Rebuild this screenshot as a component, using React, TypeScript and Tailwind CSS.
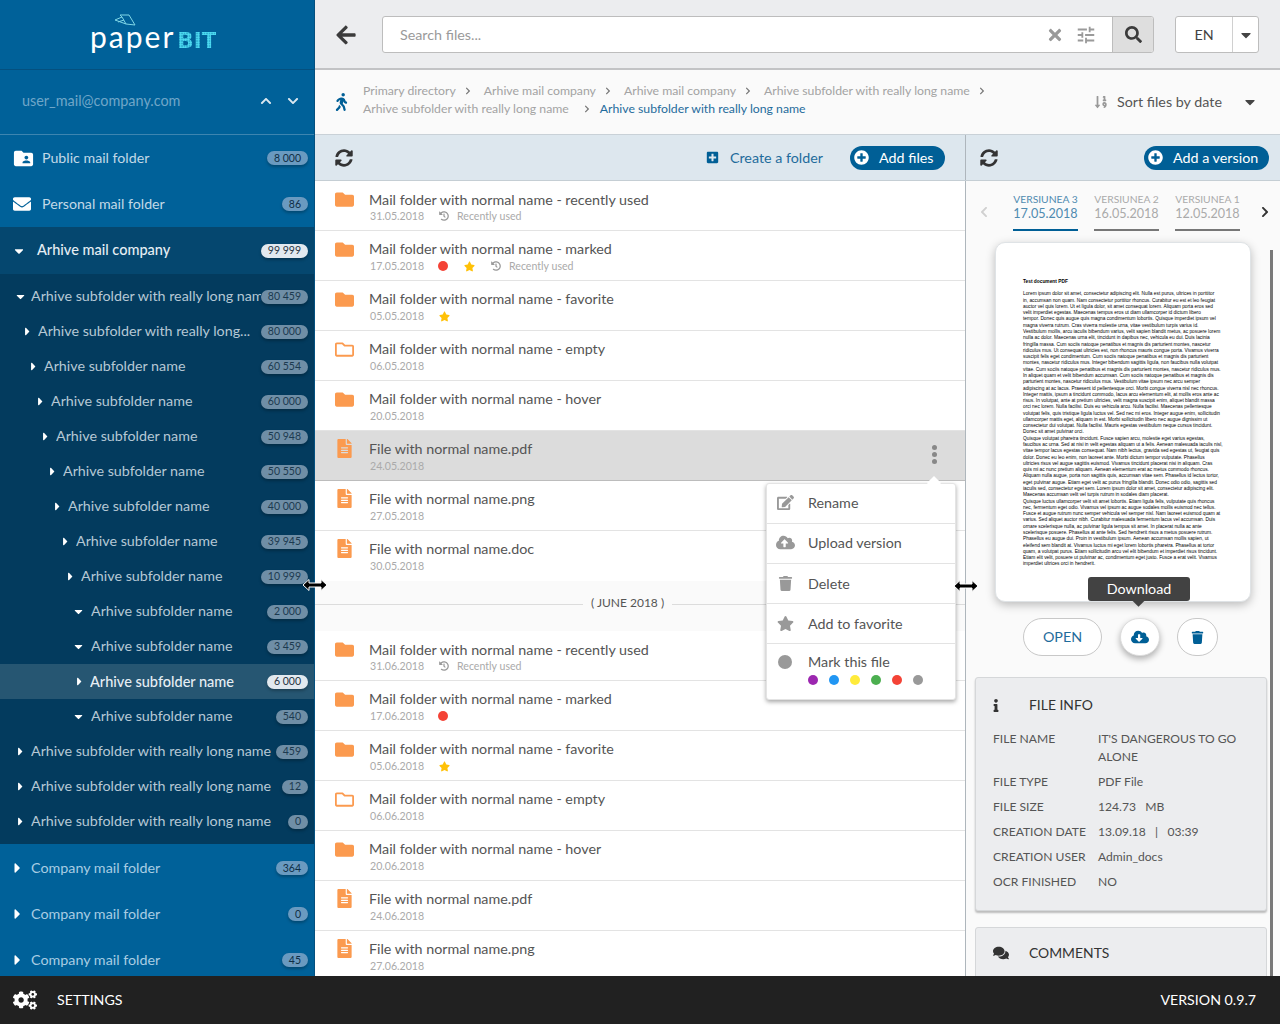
import React from "react";
import { FaArrowLeft, FaCaretDown, FaCaretRight, FaChevronDown, FaChevronLeft, FaChevronRight, FaChevronUp, FaCloudDownloadAlt, FaCloudUploadAlt, FaCogs, FaComments, FaEdit, FaEnvelope, FaFileAlt, FaFolder, FaHistory, FaInfo, FaPlusCircle, FaPlusSquare, FaRegFolder, FaSearch, FaSortNumericDown, FaStar, FaSyncAlt, FaTimes, FaTrash, FaWalking } from "react-icons/fa";
import { MdFolderShared, MdTune } from "react-icons/md";

const subRows = [
  { name: "Arhive subfolder with really long name", count: "80 459", pad: "pl-[18px]", open: true, wide: false },
  { name: "Arhive subfolder with really long...", count: "80 000", pad: "pl-[25px]", open: false, wide: false },
  { name: "Arhive subfolder name", count: "60 554", pad: "pl-[31px]", open: false, wide: false },
  { name: "Arhive subfolder name", count: "60 000", pad: "pl-[38px]", open: false, wide: false },
  { name: "Arhive subfolder name", count: "50 948", pad: "pl-[43px]", open: false, wide: false },
  { name: "Arhive subfolder name", count: "50 550", pad: "pl-[50px]", open: false, wide: false },
  { name: "Arhive subfolder name", count: "40 000", pad: "pl-[55px]", open: false, wide: false },
  { name: "Arhive subfolder name", count: "39 945", pad: "pl-[63px]", open: false, wide: false },
  { name: "Arhive subfolder name", count: "10 999", pad: "pl-[68px]", open: false, wide: false },
  { name: "Arhive subfolder name", count: "2 000", pad: "pl-[74px]", open: true, wide: true },
  { name: "Arhive subfolder name", count: "3 459", pad: "pl-[74px]", open: true, wide: true },
  { name: "Arhive subfolder name", count: "6 000", pad: "pl-[77px]", open: false, wide: false, active: true },
  { name: "Arhive subfolder name", count: "540", pad: "pl-[74px]", open: true, wide: true },
  { name: "Arhive subfolder with really long name", count: "459", pad: "pl-[18px]", open: false, wide: false },
  { name: "Arhive subfolder with really long name", count: "12", pad: "pl-[18px]", open: false, wide: false },
  { name: "Arhive subfolder with really long name", count: "0", pad: "pl-[18px]", open: false, wide: false },
];

const mayRows = [
  { kind: "folder", name: "Mail folder with normal name - recently used", date: "31.05.2018", recent: true, first: true },
  { kind: "folder", name: "Mail folder with normal name - marked", date: "17.05.2018", red: true, star: true, recent: true },
  { kind: "folder", name: "Mail folder with normal name - favorite", date: "05.05.2018", star: true },
  { kind: "empty", name: "Mail folder with normal name - empty", date: "06.05.2018" },
  { kind: "folder", name: "Mail folder with normal name - hover", date: "20.05.2018" },
  { kind: "file", name: "File with normal name.pdf", date: "24.05.2018", selected: true },
  { kind: "file", name: "File with normal name.png", date: "27.05.2018" },
  { kind: "file", name: "File with normal name.doc", date: "30.05.2018", last: true },
];

const juneRows = [
  { kind: "folder", name: "Mail folder with normal name - recently used", date: "31.06.2018", recent: true, first: true },
  { kind: "folder", name: "Mail folder with normal name - marked", date: "17.06.2018", red: true },
  { kind: "folder", name: "Mail folder with normal name - favorite", date: "05.06.2018", star: true },
  { kind: "empty", name: "Mail folder with normal name - empty", date: "06.06.2018" },
  { kind: "folder", name: "Mail folder with normal name - hover", date: "20.06.2018" },
  { kind: "file", name: "File with normal name.pdf", date: "24.06.2018" },
  { kind: "file", name: "File with normal name.png", date: "27.06.2018" },
];

const docLines = [
  "Lorem ipsum dolor sit amet, consectetur adipiscing elit. Nulla est purus, ultrices in porttitor",
  "in, accumsan non quam. Nam consectetur porttitor rhoncus. Curabitur eu est et leo feugiat",
  "auctor vel quis lorem. Ut et ligula dolor, sit amet consequat lorem. Aliquam porta eros sed",
  "velit imperdiet egestas. Maecenas tempus eros ut diam ullamcorper id dictum libero",
  "tempor. Donec quis augue quis magna condimentum lobortis. Quisque imperdiet ipsum vel",
  "magna viverra rutrum. Cras viverra molestie urna, vitae vestibulum turpis varius id.",
  "Vestibulum mollis, arcu iaculis bibendum varius, velit sapien blandit metus, ac posuere lorem",
  "nulla ac dolor. Maecenas urna elit, tincidunt in dapibus nec, vehicula eu dui. Duis lacinia",
  "fringilla massa. Cum sociis natoque penatibus et magnis dis parturient montes, nascetur",
  "ridiculus mus. Ut consequat ultricies est, non rhoncus mauris congue porta. Vivamus viverra",
  "suscipit felis eget condimentum. Cum sociis natoque penatibus et magnis dis parturient",
  "montes, nascetur ridiculus mus. Integer bibendum sagittis ligula, non faucibus nulla volutpat",
  "vitae. Cum sociis natoque penatibus et magnis dis parturient montes, nascetur ridiculus mus.",
  "In aliquet quam et velit bibendum accumsan. Cum sociis natoque penatibus et magnis dis",
  "parturient montes, nascetur ridiculus mus. Vestibulum vitae ipsum nec arcu semper",
  "adipiscing at ac lacus. Praesent id pellentesque orci. Morbi congue viverra nisl nec rhoncus.",
  "Integer mattis, ipsum a tincidunt commodo, lacus arcu elementum elit, at mollis eros ante ac",
  "risus. In volutpat, ante at pretium ultricies, velit magna suscipit enim, aliquet blandit massa",
  "orci nec lorem. Nulla facilisi. Duis eu vehicula arcu. Nulla facilisi. Maecenas pellentesque",
  "volutpat felis, quis tristique ligula luctus vel. Sed nec mi eros. Integer augue enim, sollicitudin",
  "ullamcorper mattis eget, aliquam in est. Morbi sollicitudin libero nec augue dignissim ut",
  "consectetur dui volutpat. Nulla facilisi. Mauris egestas vestibulum neque cursus tincidunt.",
  "Donec sit amet pulvinar orci.",
  "Quisque volutpat pharetra tincidunt. Fusce sapien arcu, molestie eget varius egestas,",
  "faucibus ac urna. Sed at nisi in velit egestas aliquam ut a felis. Aenean malesuada iaculis nisl,",
  "vitae tempor lacus egestas consequat. Nam nibh lectus, gravida sed egestas ut, feugiat quis",
  "dolor. Donec eu leo enim, non laoreet ante. Morbi dictum tempor vulputate. Phasellus",
  "ultricies risus vel augue sagittis euismod. Vivamus tincidunt placerat nisi in aliquam. Cras",
  "quis mi ac nunc pretium aliquam. Aenean elementum erat ac metus commodo rhoncus.",
  "Aliquam nulla augue, porta non sagittis quis, accumsan vitae sem. Phasellus id lectus tortor,",
  "eget pulvinar augue. Etiam eget velit ac purus fringilla blandit. Donec odio odio, sagittis sed",
  "iaculis sed, consectetur eget sem. Lorem ipsum dolor sit amet, consectetur adipiscing elit.",
  "Maecenas accumsan velit vel turpis rutrum in sodales diam placerat.",
  "Quisque luctus ullamcorper velit sit amet lobortis. Etiam ligula felis, vulputate quis rhoncus",
  "nec, fermentum eget odio. Vivamus vel ipsum ac augue sodales mollis euismod nec tellus.",
  "Fusce et augue rutrum nunc semper vehicula vel semper nisl. Nam laoreet euismod quam at",
  "varius. Sed aliquet auctor nibh. Curabitur malesuada fermentum lacus vel accumsan. Duis",
  "ornare scelerisque nulla, ac pulvinar ligula tempus sit amet. In placerat nulla ac ante",
  "scelerisque posuere. Phasellus at ante felis. Sed hendrerit risus a metus posuere rutrum.",
  "Phasellus eu augue dui. Proin in vestibulum ipsum. Aenean accumsan mollis sapien, ut",
  "eleifend sem blandit at. Vivamus luctus mi eget lorem lobortis pharetra. Phasellus at tortor",
  "quam, a volutpat purus. Etiam sollicitudin arcu vel elit bibendum et imperdiet risus tincidunt.",
  "Etiam elit velit, posuere ut pulvinar ac, condimentum eget justo. Fusce a erat velit. Vivamus",
  "imperdiet ultrices orci in hendrerit.",
];

const infoRows = [
  { label: "FILE TYPE", value: "PDF File" },
  { label: "FILE SIZE", value: "124.73 \u00a0 MB" },
  { label: "CREATION DATE", value: "13.09.18 \u00a0 | \u00a0 03:39" },
  { label: "CREATION USER", value: "Admin_docs" },
  { label: "OCR FINISHED", value: "NO" },
];

const Badge = ({ count, tone }: { count: string; tone: string }) => (
  <span className={`shrink-0 h-[14px] min-w-[19px] px-[7px] rounded-full flex items-center justify-center text-[10.5px] leading-none shadow-[0_2px_3px_rgba(0,0,0,0.25)] ${tone}`}>
    {count}
  </span>
);

const ResizeCursor = ({ className }: { className: string }) => (
  <svg className={`absolute ${className}`} width="26" height="14" viewBox="0 0 26 14">
    <path d="M1 7 L7 1.5 V5 H19 V1.5 L25 7 L19 12.5 V9 H7 V12.5 Z" fill="#000" stroke="#fff" strokeWidth="1" />
  </svg>
);

const Sidebar = () => (
  <aside className="w-[315px] shrink-0 bg-[#006199] border-r border-[#04507f] overflow-hidden relative">
    <div className="h-[70px] border-b border-[#04507f] flex flex-col">
      <svg className="mt-[14px] ml-[114px]" width="22" height="12" viewBox="0 0 22 12" fill="none" stroke="#7fd6e6" strokeWidth="1">
        <path d="M1 6 L8 3 L6 1 L15 1 L21 11 L12 10 Z M8 3 L12 10 M4 8 L10 6" />
      </svg>
      <div className="flex items-baseline ml-[90px] mt-[-5px] h-[30px] leading-[30px]">
        <span className="text-[30px] text-white tracking-[2px] font-normal">paper</span>
        <span className="text-[21.5px] font-bold ml-[2px] font-['DejaVu_Sans',sans-serif] bg-[radial-gradient(circle,#4fe0f5_1.1px,transparent_1.3px)] bg-[length:2.5px_2.5px] bg-clip-text text-transparent">BIT</span>
      </div>
    </div>
    <div className="h-[65px] border-b border-[#3d85b0] flex items-center pl-[22px] pr-[15px] pb-[3px]">
      <span className="text-[#6fa6c8] text-[14.4px] flex-1">user_mail@company.com</span>
      <FaChevronUp className="text-[#dbe8f0] text-[12px] mr-[15px]" />
      <FaChevronDown className="text-[#dbe8f0] text-[12px]" />
    </div>
    <div className="h-[46px] flex items-center pl-[13px] pr-[6px]">
      <MdFolderShared className="text-white text-[23px] ml-[-1.5px] w-[23px] mr-[7.5px]" />
      <span className="flex-1 text-[#c3d9e7] text-[14.2px]">Public mail folder</span>
      <Badge count="8 000" tone="bg-[#6a9ac0] text-[#0f2e45]" />
    </div>
    <div className="h-[46px] flex items-center pl-[13px] pr-[6px]">
      <FaEnvelope className="text-white text-[18px] mr-[11px]" />
      <span className="flex-1 text-[#c3d9e7] text-[14.2px]">Personal mail folder</span>
      <Badge count="86" tone="bg-[#6a9ac0] text-[#0f2e45]" />
    </div>
    <div className="h-[47px] bg-[#05476f] flex items-center pl-[13px] pr-[6px]">
      <FaCaretDown className="text-white text-[14px] w-[24px] pr-[12px]" />
      <span className="flex-1 text-[#e6eef4] text-[14.5px] font-medium pb-[1px]">Arhive mail company</span>
      <Badge count="99 999" tone="bg-[#e2e9ef] text-[#26343f]" />
    </div>
    <div className="h-[570px] bg-[#033b5e] pt-[5px]">
      {subRows.map((row, i) => (
        <div key={i} className={`h-[35px] flex items-center pr-[6px] ${row.pad} ${row.active ? "bg-[#265672]" : ""}`}>
          <span className={`shrink-0 flex items-center -translate-x-[4px] ${row.wide ? "w-[17px] justify-center" : "w-[13px] justify-center"}`}>
            {row.open ? <FaCaretDown className="text-white text-[13px]" /> : <FaCaretRight className="text-white text-[13px]" />}
          </span>
          <span className={`flex-1 min-w-0 overflow-hidden whitespace-nowrap ${row.active ? "text-[14.5px] text-[#e6eef4] font-medium" : "text-[14.3px] text-[#b6c8d5] pb-[1px]"}`}>{row.name}</span>
          <Badge count={row.count} tone={row.active ? "bg-[#e2e9ef] text-[#26343f]" : "bg-[#6f8ea6] text-[#1c3a50]"} />
        </div>
      ))}
    </div>
    {["364", "0", "45"].map((count, i) => (
      <div key={i} className="h-[46px] flex items-center pl-[10px] pr-[6px] pt-[2px]">
        <FaCaretRight className="text-white text-[16px] w-[21px] pr-[6px]" />
        <span className="flex-1 text-[#a9cde3] text-[14.3px]">Company mail folder</span>
        <Badge count={count} tone="bg-[#6a9ac0] text-[#0f2e45]" />
      </div>
    ))}
  </aside>
);

const TopBar = () => (
  <div className="h-[70px] shrink-0 bg-[#ecedef] border-b-2 border-[#c2c3c5] flex items-center pl-[20px] pr-[21px] pt-[1px]">
    <FaArrowLeft className="text-[#3b3b3b] text-[22px] mr-[25px]" />
    <div className="flex-1 h-[37px] bg-white border border-[#bdbdbd] rounded-[3px] flex items-center overflow-hidden">
      <span className="flex-1 pl-[17px] pt-[1px] text-[#9a9a9a] text-[14.3px]">Search files...</span>
      <FaTimes className="text-[#9a9a9a] text-[18px] mr-[11px]" />
      <MdTune className="text-[#9a9a9a] text-[22px] mr-[15px]" />
      <span className="w-[41px] h-full bg-[#dedede] border-l border-[#bdbdbd] flex items-center justify-center">
        <FaSearch className="text-[#3b3b3b] text-[17px]" />
      </span>
    </div>
    <div className="ml-[21px] w-[84px] h-[37px] bg-white border border-[#bdbdbd] rounded-[3px] flex items-center">
      <span className="w-[57px] text-center text-[#444] text-[14.3px] border-r border-[#d0d0d0] leading-[35px]">EN</span>
      <FaCaretDown className="text-[#444] text-[16px] mx-auto" />
    </div>
  </div>
);

const Crumb = ({ text, gap }: { text: string; gap: string }) => (
  <>
    <span className="text-[#a3a3a3]">{text}</span>
    <FaChevronRight className={`text-[#777] text-[8px] ${gap}`} />
  </>
);

const BreadcrumbBar = () => (
  <div className="h-[65px] shrink-0 bg-[#fafafa] border-b border-[#c9d1d7] flex items-center pl-[20px] pr-[22px]">
    <FaWalking className="text-[#005f96] text-[18px] w-[13px] mr-[15px]" />
    <div className="flex-1 text-[12.25px] leading-[18px] pb-[5px]">
      <div className="flex items-center whitespace-nowrap">
        <Crumb text="Primary directory" gap="ml-[8px] mr-[12px]" />
        <Crumb text="Arhive mail company" gap="ml-[8px] mr-[12px]" />
        <Crumb text="Arhive mail company" gap="ml-[8px] mr-[12px]" />
        <Crumb text="Arhive subfolder with really long name" gap="ml-[8px]" />
      </div>
      <div className="flex items-center whitespace-nowrap">
        <Crumb text="Arhive subfolder with really long name" gap="ml-[14px] mr-[9px]" />
        <span className="text-[#1f6c9c]">Arhive subfolder with really long name</span>
      </div>
    </div>
    <FaSortNumericDown className="text-[#999] text-[14px] mr-[9px]" />
    <span className="text-[#555] text-[14.3px] w-[125px]">Sort files by date</span>
    <FaCaretDown className="text-[#444] text-[16px]" />
  </div>
);

const Pill = ({ label, className }: { label: string; className: string }) => (
  <span className={`h-[24px] rounded-full bg-[#005f96] text-white text-[14.3px] flex items-center pl-[4px] ${className}`}>
    <FaPlusCircle className="text-[15px] mr-[10px]" />
    {label}
  </span>
);

const Toolbar = () => (
  <div className="h-[46px] shrink-0 bg-[#dde7ee] border-b border-[#c5ced4] flex">
    <div className="w-[651px] border-r border-[#aeb6bc] flex items-center pl-[20px] pr-[20px]">
      <FaSyncAlt className="text-[#333] text-[18px]" />
      <FaPlusSquare className="text-[#005f96] text-[13px] ml-auto mr-[11px]" />
      <span className="text-[#1f6c9c] text-[14.3px] mr-[27px]">Create a folder</span>
      <Pill label="Add files" className="w-[95px]" />
    </div>
    <div className="flex-1 flex items-center pl-[14px] pr-[11px] justify-between">
      <FaSyncAlt className="text-[#333] text-[18px]" />
      <Pill label="Add a version" className="w-[125px]" />
    </div>
  </div>
);

const FileRow = ({ row }: { row: any }) => (
  <div className={`h-[50px] flex pl-[20px] border-b ${row.selected ? "bg-[#dcdcdc] border-[#bcbcbc]" : "bg-white border-[#e3e3e3]"} ${row.last ? "border-transparent" : ""}`}>
    <span className="w-[34px] pt-[9px] shrink-0">
      {row.kind === "folder" && <FaFolder className="text-[#fb9a4f] text-[19px]" />}
      {row.kind === "empty" && <FaRegFolder className="text-[#fb9a4f] text-[19px]" />}
      {row.kind === "file" && <FaFileAlt className="text-[#fb9a4f] text-[19px] -mt-[1px]" />}
    </span>
    <div className={`flex-1 ${row.first ? "pt-[10px]" : "pt-[9px]"}`}>
      <div className="text-[#555] text-[14.3px] leading-[18px] whitespace-nowrap">{row.name}</div>
      <div className={`flex items-center text-[#aaa] text-[10.6px] leading-[14px] ${row.first ? "" : "mt-[1px]"}`}>
        <span className="w-[70px] pl-[1px]">{row.date}</span>
        {row.red && <span className="w-[10px] h-[10px] rounded-full bg-[#f44336] mr-[16px] ml-[-1px]" />}
        {row.star && <FaStar className="text-[#ffc107] text-[11px] mr-[16px]" />}
        {row.recent && (
          <>
            <FaHistory className="text-[#999] text-[10px] mr-[8px]" />
            <span>Recently used</span>
          </>
        )}
      </div>
    </div>
    {row.selected && <span className="pr-[28px] pt-[14px] flex flex-col gap-[2px]">
      <span className="w-[5px] h-[5px] rounded-full bg-[#888]" />
      <span className="w-[5px] h-[5px] rounded-full bg-[#888]" />
      <span className="w-[5px] h-[5px] rounded-full bg-[#888]" />
    </span>}
  </div>
);

const MenuItem = ({ icon, label, nudge }: { icon: React.ReactNode; label: string; nudge?: boolean }) => (
  <div className={`h-[40px] flex items-center pl-[2px] text-[#555] text-[14.3px] border-b border-[#e3e3e3] ${nudge ? "pb-[2px]" : ""}`}>
    <span className="w-[32px] flex justify-center text-[#999] text-[17px] mr-[7px]">{icon}</span>
    {label}
  </div>
);

const FileMenu = () => (
  <div className="absolute left-[451px] top-[302px] w-[190px] h-[217px] bg-white rounded-[3px] border border-[#e4e4e4] shadow-[0_2px_4px_rgba(0,0,0,0.35)]">
    <span className="absolute right-[16px] top-[-6px] w-[10px] h-[10px] bg-white rotate-45" />
    <MenuItem icon={<FaEdit />} label="Rename" nudge />
    <MenuItem icon={<FaCloudUploadAlt className="text-[19px]" />} label="Upload version" nudge />
    <MenuItem icon={<FaTrash className="text-[15px]" />} label="Delete" />
    <MenuItem icon={<FaStar />} label="Add to favorite" />
    <div className="flex pl-[2px] pt-[10px] text-[#555] text-[14.3px]">
      <span className="w-[32px] mr-[7px] flex justify-center pt-[1px]"><span className="w-[14px] h-[14px] rounded-full bg-[#999]" /></span>
      <div>
        <div className="leading-[16px]">Mark this file</div>
        <div className="flex gap-[11px] mt-[5px]">
          <span className="w-[10px] h-[10px] rounded-full bg-[#9c27b0]" />
          <span className="w-[10px] h-[10px] rounded-full bg-[#2196f3]" />
          <span className="w-[10px] h-[10px] rounded-full bg-[#ffeb3b]" />
          <span className="w-[10px] h-[10px] rounded-full bg-[#4caf50]" />
          <span className="w-[10px] h-[10px] rounded-full bg-[#f44336]" />
          <span className="w-[10px] h-[10px] rounded-full bg-[#999]" />
        </div>
      </div>
    </div>
  </div>
);

const FileList = () => (
  <div className="w-[651px] shrink-0 border-r border-[#aeb6bc] overflow-hidden relative">
    {mayRows.map((row, i) => <FileRow key={i} row={row} />)}
    <div className="h-[50px] bg-[#fafafa] flex items-center pb-[4px]">
      <span className="w-[268px] h-px bg-[#dcdcdc]" />
      <span className="text-[#555] text-[12px] px-[8px] pb-[2px]">( JUNE 2018 )</span>
      <span className="flex-1 h-px bg-[#dcdcdc]" />
    </div>
    {juneRows.map((row, i) => <FileRow key={i} row={row} />)}
    <FileMenu />
  </div>
);

const VersionTab = ({ name, date, active }: { name: string; date: string; active?: boolean }) => (
  <div className={`w-[65px] h-[38px] text-center border-b-2 ${active ? "border-[#005f96]" : "border-[#777]"}`}>
    <div className={`text-[10.3px] leading-[12px] whitespace-nowrap ${active ? "text-[#4f8ab0]" : "text-[#aaa]"}`}>{name}</div>
    <div className={`text-[12.6px] leading-[17px] whitespace-nowrap ${active ? "text-[#4f8ab0]" : "text-[#aaa]"}`}>{date}</div>
  </div>
);

const DocPreview = () => (
  <div className="relative w-[256px] h-[360px] bg-white rounded-[10px] border border-[#dfe3e6] shadow-[0_3px_10px_rgba(0,0,0,0.25)] pl-[27px] pt-[36px]">
    <div className="text-[4.82px] leading-[6.28px] font-bold text-black font-['Liberation_Sans',sans-serif]">Test document PDF</div>
    <div className="mt-[6px] text-[4.82px] leading-[6.28px] text-black whitespace-nowrap font-['Liberation_Sans',sans-serif]">
      {docLines.map((line, i) => <div key={i}>{line}</div>)}
    </div>
    <div className="absolute left-[92px] top-[334px] w-[102px] h-[24px] rounded-[3px] bg-[#424242] text-white text-[14.3px] flex items-center justify-center">
      Download
      <span className="absolute left-[46px] bottom-[-4px] w-[9px] h-[9px] bg-[#424242] rotate-45" />
    </div>
  </div>
);

const InfoCard = () => (
  <div className="ml-[9px] mr-[13px] mt-[21px] h-[234px] bg-[#ecedef] border border-[#d5d7d9] rounded-[3px] shadow-[0_2px_2px_rgba(0,0,0,0.25)] pl-[17px] pr-[10px] pt-[18px]">
    <div className="flex items-center h-[18px]">
      <FaInfo className="text-[#333] text-[13px] w-[36px] pr-[30px]" />
      <span className="text-[#333] text-[13.9px]">FILE INFO</span>
    </div>
    <div className="flex mt-[16px] text-[#555] text-[12.1px] leading-[18px]">
      <span className="w-[105px] shrink-0">FILE NAME</span>
      <span>IT'S DANGEROUS TO GO ALONE</span>
    </div>
    {infoRows.map((row) => (
      <div key={row.label} className="flex mt-[7px] text-[#555] text-[12.1px] leading-[18px]">
        <span className="w-[105px] shrink-0 whitespace-nowrap">{row.label}</span>
        <span>{row.value}</span>
      </div>
    ))}
  </div>
);

const DetailPanel = () => (
  <div className="flex-1 min-w-0 bg-[#fafafa] overflow-hidden relative">
    <div className="absolute right-[7px] top-[69px] bottom-0 w-[3px] bg-[#777]" />
    <div className="flex items-center h-[50px] pl-[12px] pt-[12px]">
      <FaChevronLeft className="text-[#d0d0d0] text-[12px] mr-[23px]" />
      <div className="flex gap-[16px]">
        <VersionTab name="VERSIUNEA 3" date="17.05.2018" active />
        <VersionTab name="VERSIUNEA 2" date="16.05.2018" />
        <VersionTab name="VERSIUNEA 1" date="12.05.2018" />
      </div>
      <FaChevronRight className="text-[#333] text-[12px] ml-[19px]" />
    </div>
    <div className="pl-[29px] mt-[11px]"><DocPreview /></div>
    <div className="flex items-center mt-[16px] pl-[57px]">
      <span className="w-[79px] h-[38px] rounded-full border border-[#c8c8c8] bg-white flex items-center justify-center text-[#1f6c9c] text-[14.3px]">OPEN</span>
      <span className="w-[40px] h-[38px] ml-[18px] rounded-full bg-white border border-[#ddd] shadow-[0_3px_6px_rgba(0,0,0,0.3)] flex items-center justify-center">
        <FaCloudDownloadAlt className="text-[#005f96] text-[18px]" />
      </span>
      <span className="w-[41px] h-[38px] ml-[17px] rounded-full border border-[#c8c8c8] bg-white flex items-center justify-center">
        <FaTrash className="text-[#005f96] text-[13px]" />
      </span>
    </div>
    <InfoCard />
    <div className="ml-[9px] mr-[13px] mt-[16px] h-[80px] bg-[#ecedef] border border-[#d5d7d9] rounded-[3px] pl-[17px] pt-[16px]">
      <div className="flex items-center h-[18px]">
        <FaComments className="text-[#333] text-[16px] mr-[20px]" />
        <span className="text-[#333] text-[13.9px]">COMMENTS</span>
      </div>
    </div>
  </div>
);

export default function App() {
  return (
    <div className="h-screen w-full flex flex-col relative overflow-hidden font-[Lato,sans-serif]">
      <div className="flex-1 flex min-h-0">
        <Sidebar />
        <main className="flex-1 min-w-0 flex flex-col">
          <TopBar />
          <BreadcrumbBar />
          <Toolbar />
          <div className="flex-1 flex min-h-0">
            <FileList />
            <DetailPanel />
          </div>
        </main>
      </div>
      <footer className="h-[48px] shrink-0 bg-[#212121] flex items-center pl-[13px] pr-[24px] text-white text-[14.2px]">
        <FaCogs className="text-[24px] mr-[20px]" />
        <span className="flex-1">SETTINGS</span>
        <span>VERSION 0.9.7</span>
      </footer>
      <ResizeCursor className="left-[302px] top-[578px]" />
      <ResizeCursor className="left-[953px] top-[579px]" />
    </div>
  );
}
